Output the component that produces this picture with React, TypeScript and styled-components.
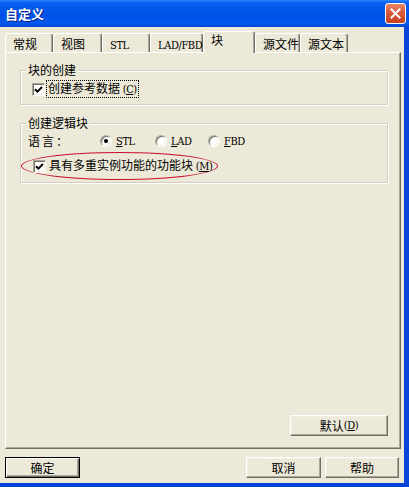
import React from 'react';
import styled, { createGlobalStyle } from 'styled-components';

const GlobalStyle = createGlobalStyle`
    *, *::before, *::after {
        box-sizing: border-box;
    }
    html, body {
        margin: 0;
        padding: 0;
        background: #fff;
    }
    body {
        font-family: "Noto Sans CJK SC", "Liberation Sans", sans-serif;
        font-size: 12px;
        color: #000;
    }
`

const tabs = [
    { label: '常规', width: 48 },
    { label: '视图', width: 49 },
    { label: 'STL', width: 48, latin: true },
    { label: 'LAD/FBD', width: 53, latin: true },
    { label: '块', width: 52, active: true },
    { label: '源文件', width: 45 },
    { label: '源文本', width: 48 },
]

const CheckBox = () => (
    <Check>
        <svg width="9" height="9" viewBox="0 0 9 9">
            <path d="M1 4.2 L3.4 6.6 L8 2" stroke="#000" strokeWidth="2" fill="none" />
        </svg>
    </Check>
)

const App = (): JSX.Element => {
    return (
        <>
            <GlobalStyle />
            <Window>
                <TitleBar>
                    <Title>自定义</Title>
                    <CloseButton>
                        <svg width="11" height="11" viewBox="0 0 11 11">
                            <path d="M1.5 1.5 L9.5 9.5 M9.5 1.5 L1.5 9.5" stroke="#fff" strokeWidth="2" strokeLinecap="square" />
                        </svg>
                    </CloseButton>
                </TitleBar>
                <Body>
                    <TabStrip>
                        {tabs.map((t) => (
                            <Tab key={t.label} $w={t.width} $active={!!t.active}>
                                {t.latin ? <Latin>{t.label}</Latin> : t.label}
                            </Tab>
                        ))}
                    </TabStrip>
                    <Panel>
                        <Group $top={10} $pt={4} $pb={7}>
                            <Legend>块的创建</Legend>
                            <Row $pl={11}>
                                <CheckBox />
                                <FocusLabel>创建参考数据 <Latin>(<u>C</u>)</Latin></FocusLabel>
                            </Row>
                        </Group>
                        <Group $top={11} $pt={3} $pb={2}>
                            <Legend>创建逻辑块</Legend>
                            <Row $pl={7}>
                                <LangLabel>语言：</LangLabel>
                                <RadioItem $w={55}>
                                    <Radio $checked />
                                    <Latin><u>S</u>TL</Latin>
                                </RadioItem>
                                <RadioItem $w={53}>
                                    <Radio />
                                    <Latin><u>L</u>AD</Latin>
                                </RadioItem>
                                <RadioItem $w={53}>
                                    <Radio />
                                    <Latin><u>F</u>BD</Latin>
                                </RadioItem>
                            </Row>
                            <Highlight>
                                <CheckBox />
                                <Text>具有多重实例功能的功能块 <Latin>(<u>M</u>)</Latin></Text>
                            </Highlight>
                        </Group>
                        <Spacer />
                        <PanelFooter>
                            <Button $w={98}>默认 <Latin>(<u>D</u>)</Latin></Button>
                        </PanelFooter>
                    </Panel>
                    <ButtonRow>
                        <Button $w={75} $default>确定</Button>
                        <Push />
                        <Button $w={75}>取消</Button>
                        <Button $w={74}>帮助</Button>
                    </ButtonRow>
                </Body>
            </Window>
        </>
    );
};

const Window = styled.div`
    width: 409px;
    height: 487px;
    display: flex;
    flex-direction: column;
    background: #ECE9D8;
    overflow: hidden;
`

const TitleBar = styled.div`
    flex: none;
    height: 27px;
    display: flex;
    align-items: center;
    justify-content: space-between;
    padding: 0 3px 0 5px;
    background: linear-gradient(180deg, #2a86ff 0%, #0a5ef2 10%, #0156ea 35%, #0052e6 60%, #0158ef 85%, #0346d6 100%);
`

const Title = styled.div`
    color: #fff;
    font-weight: bold;
    font-size: 13px;
    line-height: 16px;
    text-shadow: 1px 1px 0 #0a1f8a;
`

const CloseButton = styled.div`
    width: 21px;
    height: 21px;
    display: flex;
    align-items: center;
    justify-content: center;
    border: 1px solid #fff;
    border-radius: 3px;
    background: linear-gradient(180deg, #e8876a 0%, #d9583a 45%, #c8411f 100%);
`

const Body = styled.div`
    flex: 1;
    min-height: 0;
    display: flex;
    flex-direction: column;
    padding: 4px 3px 5px 5px;
    border-right: 5px solid #0846da;
    border-bottom: 4px solid #0843d8;
`

const TabStrip = styled.div`
    flex: none;
    height: 21px;
    display: flex;
    align-items: flex-end;
    position: relative;
    z-index: 1;
`

const Tab = styled.div<{ $w: number; $active: boolean }>`
    width: ${p => p.$w}px;
    height: ${p => p.$active ? 22 : 19}px;
    margin-bottom: ${p => p.$active ? -1 : 0}px;
    padding: ${p => p.$active ? 1 : 3}px 0 0 7px;
    line-height: 14px;
    background: #ECE9D8;
    border-top: 1px solid #fff;
    border-left: 1px solid #fff;
    border-right: 1px solid #716F64;
    border-radius: 3px 3px 0 0;
    box-shadow: inset -1px 0 0 #ACA899;
    white-space: nowrap;
`

const Latin = styled.span`
    font-family: "DejaVu Serif Condensed", "DejaVu Serif", "Liberation Serif", serif;
    font-stretch: condensed;
    font-size: 11px;
    letter-spacing: -0.4px;
`

const Panel = styled.div`
    flex: 1;
    min-height: 0;
    display: flex;
    flex-direction: column;
    padding: 0 12px 12px 14px;
    border-top: 1px solid #fff;
    border-left: 1px solid #fff;
    border-right: 1px solid #716F64;
    border-bottom: 1px solid #716F64;
    box-shadow: inset -1px -1px 0 #ACA899;
`

const Group = styled.fieldset<{ $top: number; $pt: number; $pb: number }>`
    margin: ${p => p.$top}px 0 0;
    padding: ${p => p.$pt}px 0 ${p => p.$pb}px;
    min-inline-size: auto;
    border: 1px solid #D0D0BF;
    box-shadow: inset 1px 1px 0 #fff, 1px 1px 0 #fff;
`

const Legend = styled.legend`
    margin-left: 5px;
    padding: 0 2px;
    line-height: 14px;
    background: #ECE9D8;
`

const Row = styled.div<{ $pl: number }>`
    display: flex;
    align-items: center;
    height: 16px;
    padding-left: ${p => p.$pl}px;
`

const Check = styled.span`
    flex: none;
    width: 13px;
    height: 13px;
    display: flex;
    align-items: center;
    justify-content: center;
    background: #fff;
    border: 1px solid;
    border-color: #ACA899 #fff #fff #ACA899;
    box-shadow: inset 1px 1px 0 #716F64, inset -1px -1px 0 #F1EFE2;
`

const FocusLabel = styled.span`
    margin-left: 2px;
    padding: 0 1px;
    line-height: 14px;
    outline: 1px dotted #000;
    white-space: nowrap;
`

const Text = styled.span`
    margin-left: 3px;
    line-height: 14px;
    white-space: nowrap;
`

const LangLabel = styled.span`
    width: 72px;
    line-height: 14px;
    letter-spacing: 2px;
`

const RadioItem = styled.span<{ $w: number }>`
    width: ${p => p.$w}px;
    display: flex;
    align-items: center;
    gap: 4px;
`

const Radio = styled.span<{ $checked?: boolean }>`
    flex: none;
    width: 12px;
    height: 12px;
    border-radius: 50%;
    display: flex;
    align-items: center;
    justify-content: center;
    background: #fff;
    border: 1px solid;
    border-color: #ACA899 #fff #fff #ACA899;
    box-shadow: inset 1px 1px 0 #716F64, inset -1px -1px 0 #F1EFE2;
    &::after {
        content: '';
        width: 4px;
        height: 4px;
        border-radius: 50%;
        background: ${p => p.$checked ? '#000' : 'transparent'};
    }
`

const Highlight = styled.div`
    align-self: flex-start;
    display: flex;
    align-items: center;
    width: 197px;
    height: 28px;
    margin-top: 3px;
    padding-left: 11px;
    border: 1px solid #c8102e;
    border-radius: 50%;
`

const Spacer = styled.div`
    flex: 1;
`

const PanelFooter = styled.div`
    display: flex;
    justify-content: flex-end;
`

const Button = styled.div<{ $w: number; $default?: boolean }>`
    width: ${p => p.$w}px;
    height: 21px;
    display: flex;
    align-items: center;
    justify-content: center;
    line-height: 14px;
    background: #ECE9D8;
    border: 1px solid;
    border-color: ${p => p.$default ? '#000' : '#fff #716F64 #716F64 #fff'};
    box-shadow: ${p => p.$default
        ? 'inset 1px 1px 0 #fff, inset -1px -1px 0 #716F64, inset -2px -2px 0 #ACA899'
        : 'inset -1px -1px 0 #ACA899, inset 1px 1px 0 #F1EFE2'};
    white-space: nowrap;
`

const ButtonRow = styled.div`
    flex: none;
    display: flex;
    gap: 4px;
    margin-top: 8px;
    padding-right: 2px;
`

const Push = styled.div`
    flex: 1;
`

export default App;
